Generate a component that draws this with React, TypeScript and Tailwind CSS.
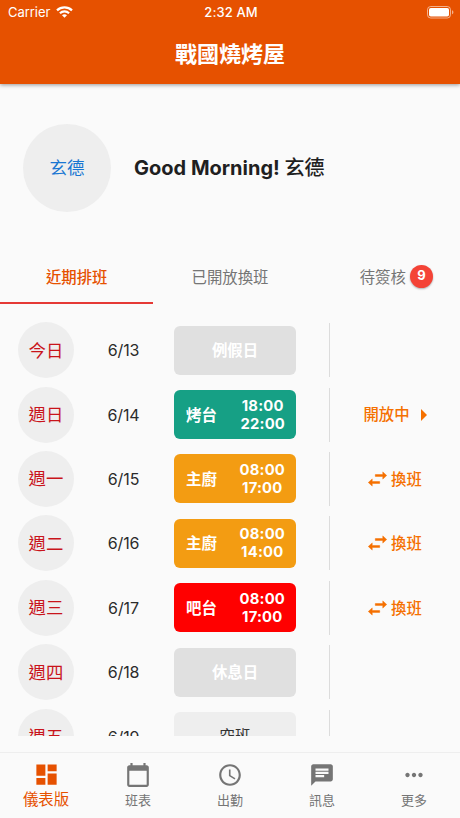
import clsx from "clsx";
import type { IconType } from "react-icons";
import { MdAccessTime, MdCalendarToday, MdChat, MdDashboard, MdMoreHoriz } from "react-icons/md";

type Shift = {
  day: string;
  date: string;
  label: string;
  color: string;
  time?: [string, string];
  action?: "open" | "swap";
};

const shifts: Shift[] = [
  { day: "今日", date: "6/13", label: "例假日", color: "bg-[#e0e0e0] text-white" },
  { day: "週日", date: "6/14", label: "烤台", color: "bg-[#16a085] text-white", time: ["18:00", "22:00"], action: "open" },
  { day: "週一", date: "6/15", label: "主廚", color: "bg-[#f39c12] text-white", time: ["08:00", "17:00"], action: "swap" },
  { day: "週二", date: "6/16", label: "主廚", color: "bg-[#f39c12] text-white", time: ["08:00", "14:00"], action: "swap" },
  { day: "週三", date: "6/17", label: "吧台", color: "bg-[#ff0000] text-white", time: ["08:00", "17:00"], action: "swap" },
  { day: "週四", date: "6/18", label: "休息日", color: "bg-[#e0e0e0] text-white" },
  { day: "週五", date: "6/19", label: "空班", color: "bg-[#eeeeee] text-[#333333]" },
];

const navItems: { label: string; icon: IconType; active?: boolean }[] = [
  { label: "儀表版", icon: MdDashboard, active: true },
  { label: "班表", icon: MdCalendarToday },
  { label: "出勤", icon: MdAccessTime },
  { label: "訊息", icon: MdChat },
  { label: "更多", icon: MdMoreHoriz },
];

function StatusBar() {
  return (
    <div className="grid h-6 grid-cols-3 items-center pr-[6px] pl-2 text-[13px] leading-none">
      <div className="flex items-center gap-[6px]">
        <span className="tracking-[-0.05px]">Carrier</span>
        <svg width="17" height="12" viewBox="0 0 17 12" fill="none" stroke="currentColor" strokeWidth="2.2" aria-hidden="true">
          <path d="M1 4.4C5.2.4 11.8.4 16 4.4" />
          <path d="M3.9 7.2c2.6-2.4 6.6-2.4 9.2 0" />
          <path d="M8.5 11.8 6 9.3c1.4-1.3 3.6-1.3 5 0z" fill="currentColor" stroke="none" />
        </svg>
      </div>
      <span className="text-center font-medium tracking-[0.1px]">2:32 AM</span>
      <svg className="justify-self-end" width="27" height="13" viewBox="0 0 27 13" fill="none" aria-hidden="true">
        <rect x="0.5" y="0.5" width="23" height="11.5" rx="3.2" stroke="white" strokeOpacity="0.55" />
        <rect x="2" y="2" width="20" height="8.5" rx="1.8" fill="white" />
        <path d="M25 4.3v4c.8-.3 1.4-1.1 1.4-2s-.6-1.7-1.4-2z" fill="white" fillOpacity="0.55" />
      </svg>
    </div>
  );
}

function SwapIcon() {
  return (
    <svg className="mr-1" width="19" height="16" viewBox="0 0 19 16" fill="currentColor" stroke="currentColor" strokeWidth="0.5" strokeLinejoin="round" aria-hidden="true">
      <path d="M14.8 0.9 18.7 4.5 14.8 8.1V5.4H7.3V3.6h7.5z" />
      <path d="M4.2 7.9.3 11.5l3.9 3.6v-2.7h7.5v-1.8H4.2z" />
    </svg>
  );
}

function Header() {
  return (
    <header className="relative z-10 h-[84px] bg-[#e65100] text-white shadow-[0_1px_4px_rgba(0,0,0,0.4)]">
      <StatusBar />
      <h1 className="flex h-[60px] items-center justify-center text-[22px] font-bold">戰國燒烤屋</h1>
    </header>
  );
}

function Tabs() {
  return (
    <div className="grid h-[54px] grid-cols-3 text-[15.4px] text-[#757575]">
      <div className="flex items-center justify-center border-b-2 border-[#e53935] pt-[3px] font-medium text-[#e65100]">近期排班</div>
      <div className="flex items-center justify-center pt-px">已開放換班</div>
      <div className="flex items-center justify-center gap-1 pt-px pl-[26px]">
        待簽核
        <span className="-mt-[3px] flex size-[23px] items-center justify-center rounded-full bg-[#f44336] text-[13px] font-bold text-white shadow-[0_1px_2px_rgba(0,0,0,0.3)]">
          9
        </span>
      </div>
    </div>
  );
}

function ShiftRow({ shift }: { shift: Shift }) {
  return (
    <li className="flex h-[64.4px] shrink-0 items-center pl-[18px]">
      <div className="flex size-14 items-center justify-center rounded-full bg-[#eeeeee] pt-px text-[17.4px] text-[#c9141b]">{shift.day}</div>
      <div className="w-[99px] text-center text-base tracking-[-0.1px] text-[#2b2b2b]">{shift.date}</div>
      <div className={clsx("ml-px flex h-[49px] w-[122px] items-center rounded-[6px]", shift.color, shift.time ? "justify-between pr-[11px] pl-3" : "justify-center")}>
        <span className={clsx("pt-px text-[15.4px]", shift.label === "空班" ? "font-normal" : "font-bold")}>{shift.label}</span>
        {shift.time && (
          <div className="text-center text-[14.8px] leading-[18px] font-bold tracking-[0.2px]">
            <div>{shift.time[0]}</div>
            <div>{shift.time[1]}</div>
          </div>
        )}
      </div>
      <div className="ml-[33px] flex h-[54px] flex-1 items-center justify-center border-l border-[#dcdcdc] text-[15.4px] font-medium text-[#f57000]">
        {shift.action === "open" && (
          <>
            <span>開放中</span>
            <svg className="ml-[11px]" width="6" height="12" viewBox="0 0 6 12" fill="currentColor" aria-hidden="true">
              <path d="M0 0l6 6-6 6z" />
            </svg>
          </>
        )}
        {shift.action === "swap" && (
          <>
            <SwapIcon />
            <span className="pt-px">換班</span>
          </>
        )}
      </div>
    </li>
  );
}

function BottomNav() {
  return (
    <nav className="grid h-[66px] grid-cols-5 border-t border-[#eeeeee]">
      {navItems.map(({ label, icon: Icon, active }) => (
        <div key={label} className={clsx("flex flex-col items-center", active ? "pt-2 text-[#e65100]" : "pt-[9px] text-[#757575]")}>
          <Icon size={active ? 27 : 26} />
          <span className={clsx("flex h-6 items-center", active ? "text-[15.4px]" : "pt-[2px] text-[13px]")}>{label}</span>
        </div>
      ))}
    </nav>
  );
}

export default function App() {
  return (
    <div className="flex h-[818px] w-[460px] flex-col overflow-hidden bg-[#fafafa] font-[Inter,'Noto_Sans_CJK_TC',sans-serif]">
      <Header />
      <section className="flex h-[166px] items-center gap-[23px] pt-[2px] pl-[23px]">
        <div className="flex size-[88px] items-center justify-center rounded-full bg-[#eeeeee] pt-px text-[17.5px] text-[#1976d2]">玄德</div>
        <h2 className="text-[20px] font-bold text-[#1f1f1f]">
          Good Morning! <span className="font-medium">玄德</span>
        </h2>
      </section>
      <Tabs />
      <ul className="flex h-[432px] flex-col overflow-hidden pt-[14px]">
        {shifts.map((shift) => (
          <ShiftRow key={shift.date} shift={shift} />
        ))}
      </ul>
      <div className="h-4" />
      <BottomNav />
    </div>
  );
}
